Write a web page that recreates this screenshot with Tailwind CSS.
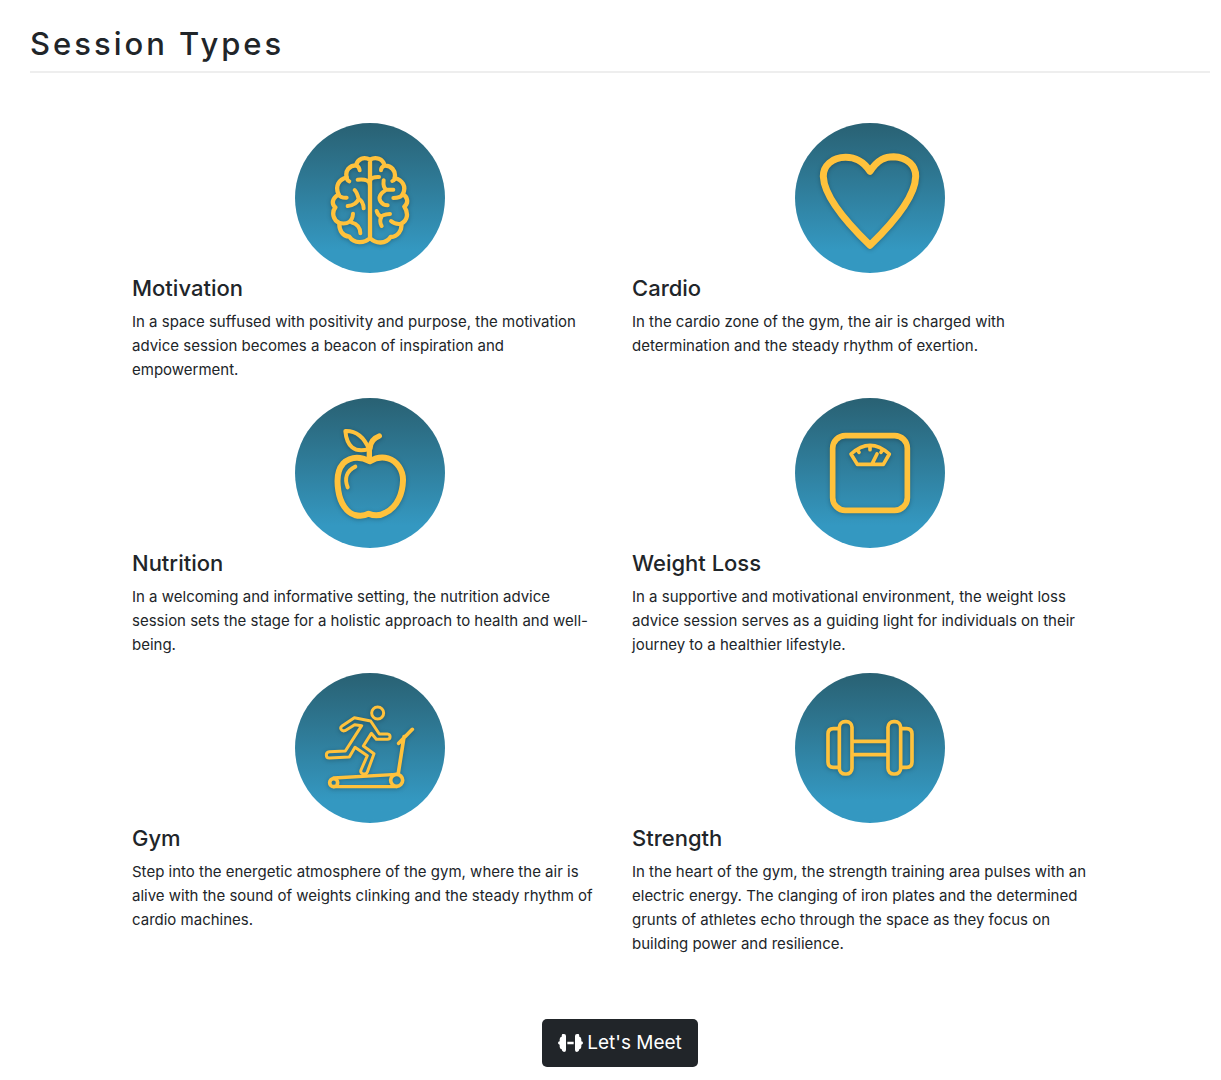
<!DOCTYPE html>
<html lang="en">
<head>
<meta charset="utf-8">
<meta name="viewport" content="width=device-width, initial-scale=1">
<title>Session Types</title>
<script src="https://cdn.jsdelivr.net/npm/@tailwindcss/browser@4"></script>
</head>
<body class="bg-white font-[Inter,sans-serif] text-[15px] leading-6 text-[#212529]">
<main class="flex flex-col pt-6 pr-[11px] pb-3 pl-[30px]">
  <h1 class="border-b-2 border-[#eeeeee] pb-2 text-[31px] leading-[39px] font-medium tracking-[3px]">Session Types</h1>

  <div class="mx-auto mt-[50px] grid w-full max-w-[1000px] grid-cols-2">
    <section class="px-3 pb-4">
      <div class="mx-auto size-[150px] rounded-full bg-linear-to-b from-[#296173] to-[#3498c1] to-85%">
        <svg viewBox="15 15 450 450" class="size-full drop-shadow-[0_1px_2px_rgba(0,0,0,0.25)]" fill="none" stroke="#ffc23c" stroke-width="13" stroke-linecap="round" stroke-linejoin="round" aria-hidden="true">
          <path d="M240 125V360M240 125C222 115 203 122 198 142C178 142 165 158 170 178C147 184 134 204 146 230C126 240 124 258 136 268C124 284 130 307 148 315C147 339 159 354 178 356C193 377 222 377 240 360C259 379 287 378 302 357C323 356 337 337 334 317C353 307 356 286 343 266C358 253 351 235 338 229C351 205 336 185 314 180C319 158 303 142 284 143C279 122 257 115 240 125"/>
          <path stroke-width="12" d="M198 142Q208 146 209 157M170 178Q170 187 178 190M146 230Q152 240 170 239M148 315Q187 322 189 287M184 313Q211 320 211 346M203 185Q240 181 240 203M240 187Q246 176 267 177M194 216Q200 221 206 242Q199 262 173 264M206 242Q220 250 221 271M284 143Q273 147 273 157M314 180Q315 186 307 189M281 187Q278 209 289 215L310 215M289 215Q260 233 272 251Q279 262 293 262M338 229Q331 240 310 240M334 317Q315 320 303 309M260 279Q263 291 274 297Q276 290 300 288M274 297Q267 310 275 324"/>
        </svg>
      </div>
      <h2 class="mb-1.5 text-[22px] leading-[31px] font-medium">Motivation</h2>
      <p class="pr-2">In a space suffused with positivity and purpose, the motivation advice session becomes a beacon of inspiration and empowerment.</p>
    </section>

    <section class="px-3 pb-4">
      <div class="mx-auto size-[150px] rounded-full bg-linear-to-b from-[#296173] to-[#3498c1] to-85%">
        <svg viewBox="15 15 450 450" class="size-full drop-shadow-[0_1px_2px_rgba(0,0,0,0.25)]" fill="none" stroke="#ffc23c" stroke-width="21" stroke-linecap="round" stroke-linejoin="round" aria-hidden="true">
          <path d="M240 160C216 124 191 118 167 118C126 118 99 144 100 176C102 225 147 292 240 382C333 292 376 225 377 176C378 144 352 117 311 116C286 116 264 124 240 160Z"/>
        </svg>
      </div>
      <h2 class="mb-1.5 text-[22px] leading-[31px] font-medium">Cardio</h2>
      <p class="pr-2">In the cardio zone of the gym, the air is charged with determination and the steady rhythm of exertion.</p>
    </section>

    <section class="px-3 pb-4">
      <div class="mx-auto size-[150px] rounded-full bg-linear-to-b from-[#296173] to-[#3498c1] to-85%">
        <svg viewBox="15 15 450 450" class="size-full drop-shadow-[0_1px_2px_rgba(0,0,0,0.25)]" fill="none" stroke="#ffc23c" stroke-width="18" stroke-linecap="round" stroke-linejoin="round" aria-hidden="true">
          <path d="M240 205C206 188 179 193 159 212C141 232 140 262 145 293C151 332 171 359 194 366C210 370 227 367 236 362C250 368 270 369 287 359C324 341 338 298 339 263C340 232 321 204 294 196C276 191 257 194 240 205Z"/>
          <path stroke-width="16" d="M238 203V166M240 166C241 146 252 135 268 129"/>
          <path stroke-width="12" d="M196 221C169 234 163 258 173 283"/>
          <path stroke-width="12" d="M166 114C192 113 219 126 237 168C192 182 170 158 166 114Z"/>
        </svg>
      </div>
      <h2 class="mb-1.5 text-[22px] leading-[31px] font-medium">Nutrition</h2>
      <p class="pr-2">In a welcoming and informative setting, the nutrition advice session sets the stage for a holistic approach to health and well-being.</p>
    </section>

    <section class="px-3 pb-4">
      <div class="mx-auto size-[150px] rounded-full bg-linear-to-b from-[#296173] to-[#3498c1] to-85%">
        <svg viewBox="15 15 450 450" class="size-full drop-shadow-[0_1px_2px_rgba(0,0,0,0.25)]" fill="none" stroke="#ffc23c" stroke-linecap="round" stroke-linejoin="round" aria-hidden="true">
          <rect x="128" y="128" width="224" height="224" rx="38" stroke-width="17"/>
          <path stroke-width="11" d="M183 183Q240 131 298 183L280 214H202ZM202 170L207 178M240 158V170M278 170L273 178M247 211L261 183"/>
        </svg>
      </div>
      <h2 class="mb-1.5 text-[22px] leading-[31px] font-medium">Weight Loss</h2>
      <p class="pr-2">In a supportive and motivational environment, the weight loss advice session serves as a guiding light for individuals on their journey to a healthier lifestyle.</p>
    </section>

    <section class="px-3 pb-4">
      <div class="mx-auto size-[150px] rounded-full bg-linear-to-b from-[#296173] to-[#3498c1] to-85%">
        <svg viewBox="15 15 450 450" class="size-full drop-shadow-[0_1px_2px_rgba(0,0,0,0.25)]" fill="none" stroke="#ffc23c" stroke-width="9" stroke-linecap="round" stroke-linejoin="round" aria-hidden="true">
          <circle cx="263" cy="135" r="18"/>
          <path d="M193 149L242 159L268 198H292C303 199 303 213 292 214H259L244 196L220 234L252 257L232 312Q229 320 220 318Q210 315 213 306L232 263L195 238L178 267L118 270C106 270 106 252 118 251L166 249L215 173L194 170L165 188C154 191 149 180 155 175Z"/>
          <path stroke-width="11" d="M342 206L325 315M326 226L367 184"/>
          <path stroke-width="10" d="M131 330L320 319M131 356H320"/>
          <circle cx="131" cy="344" r="12" stroke-width="11"/>
          <circle cx="320" cy="337" r="18" stroke-width="11"/>
        </svg>
      </div>
      <h2 class="mb-1.5 text-[22px] leading-[31px] font-medium">Gym</h2>
      <p class="pr-2">Step into the energetic atmosphere of the gym, where the air is alive with the sound of weights clinking and the steady rhythm of cardio machines.</p>
    </section>

    <section class="px-3 pb-4">
      <div class="mx-auto size-[150px] rounded-full bg-linear-to-b from-[#296173] to-[#3498c1] to-85%">
        <svg viewBox="15 15 450 450" class="size-full drop-shadow-[0_1px_2px_rgba(0,0,0,0.25)]" fill="none" stroke="#ffc23c" stroke-width="11" stroke-linecap="round" stroke-linejoin="round" aria-hidden="true">
          <rect x="148" y="161" width="38" height="157" rx="17"/>
          <rect x="294" y="161" width="38" height="157" rx="17"/>
          <path d="M145 182H130Q114 182 114 198V282Q114 298 130 298H145M335 182H350Q366 182 366 198V282Q366 298 350 298H335M190 220H290M190 260H290"/>
        </svg>
      </div>
      <h2 class="mb-1.5 text-[22px] leading-[31px] font-medium">Strength</h2>
      <p class="pr-2">In the heart of the gym, the strength training area pulses with an electric energy. The clanging of iron plates and the determined grunts of athletes echo through the space as they focus on building power and resilience.</p>
    </section>
  </div>

  <button type="button" class="mx-auto mt-[47px] flex h-12 items-center gap-1 rounded-[5px] bg-[#212529] px-4 text-[19px] text-white">
    <svg viewBox="0 0 75 54" class="h-[18px] w-[25px]" fill="#fff" aria-hidden="true">
      <path d="M13 0H18Q24 0 24 6V48Q24 54 18 54Q12 54 11 46Q5 45 5 38V32Q0 31 0 27Q0 23 5 22V16Q5 9 11 8Q11 2 13 0ZM62 0H57Q51 0 51 6V48Q51 54 57 54Q63 54 64 46Q70 45 70 38V32Q75 31 75 27Q75 23 70 22V16Q70 9 64 8Q64 2 62 0ZM28 23H47V31H28Z"/>
    </svg>
    Let's Meet
  </button>
</main>
</body>
</html>
